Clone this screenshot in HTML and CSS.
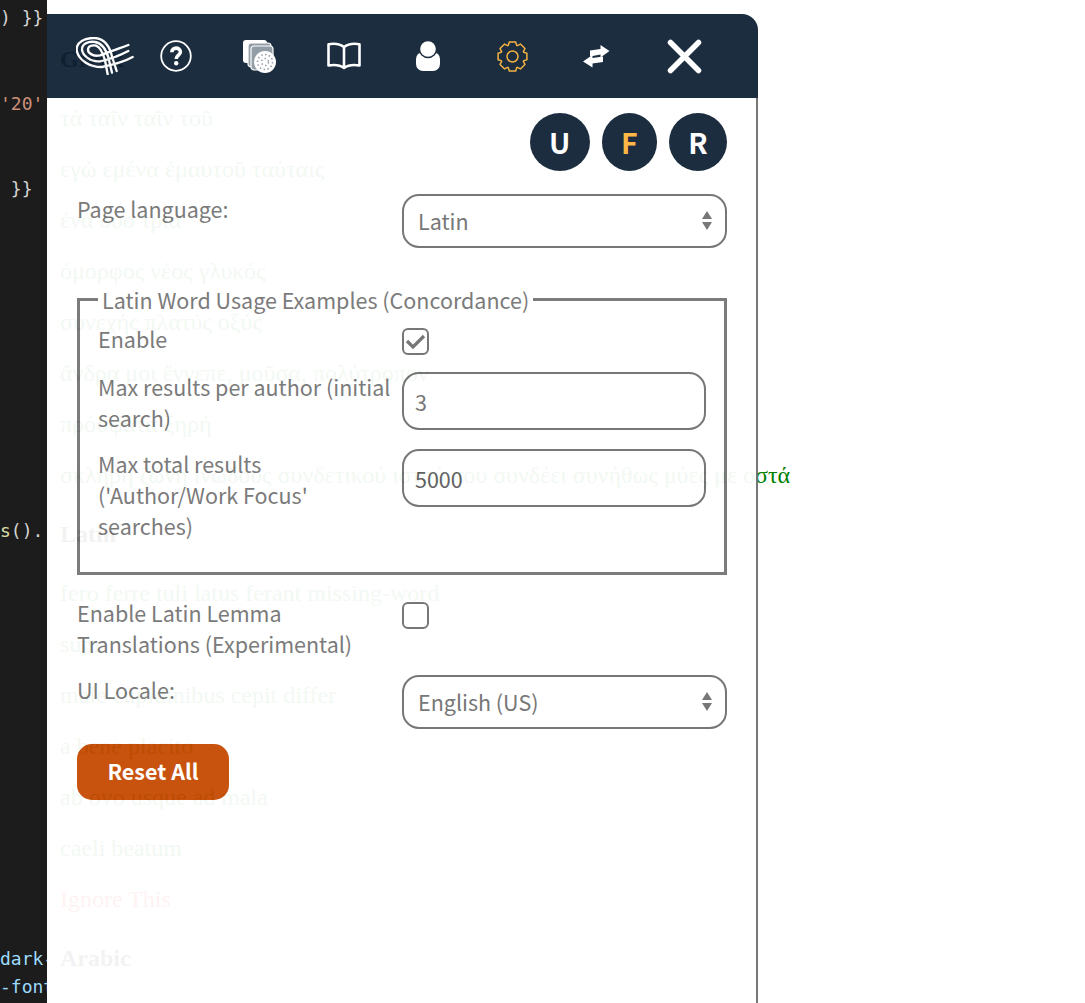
FILE: index.html
```html
<!DOCTYPE html>
<html lang="en">
<head>
<meta charset="utf-8">
<title>Settings</title>
<link rel="stylesheet" href="styles.css">
</head>
<body>
<div class="stage">
<pre class="code"><span class="c-plain">) }}</span>


<span class="c-str">'20'</span>


<span class="c-plain"> }}</span>











<span class="c-fn">s</span><span class="c-plain">().:</span>














<span class="c-var">dark-</span>
<span class="c-var">-font</span></pre>
<main class="page">
  <h3 class="heading heading-first">Greek</h3>
  <p class="line">τά ταῖν ταῖν τοῦ</p>
  <p class="line">εγώ εμένα ἐμαυτοῦ ταύταις</p>
  <p class="line">ένα δύο τρία</p>
  <p class="line">όμορφος νέος γλυκός</p>
  <p class="line">συνεχής πλατύς οξύς</p>
  <p class="line">ἄνδρα μοι ἔννεπε, μοῦσα, πολύτροπον</p>
  <p class="line">πρόσφατα ξηρή</p>
  <p class="line">σκληρή ζώνη ινώδους συνδετικού ιστού που συνδέει συνήθως μύες με οστά</p>
  <h3 class="heading">Latin</h3>
  <p class="line">fero ferre tuli latus ferant missing-word</p>
  <p class="line">sum</p>
  <p class="line">male cupidinibus cepit differ</p>
  <p class="line">a bene placito</p>
  <p class="line">ab ovo usque ad mala</p>
  <p class="line">caeli beatum</p>
  <p class="line line-ignore">Ignore This</p>
  <h3 class="heading">Arabic</h3>
</main>

<aside class="panel">
  <nav class="topbar">
    <span class="logo">
      <svg width="58" height="38" viewBox="88 110 174 114" fill="none" stroke="#fff" stroke-width="7" stroke-linecap="round">
        <path d="M258 170C235 183 205 192 165 200C130 200 95 180 90 150C88 125 115 112 145 113C175 115 190 140 197 172L210 212"/>
        <path d="M245 152C220 165 190 177 160 183C130 185 108 165 106 148C105 130 125 122 145 125C165 128 178 145 186 175L196 217"/>
        <path d="M245 134C215 145 190 155 160 165C140 170 124 158 124 148C124 138 135 133 148 136C160 140 168 155 175 180L183 222"/>
      </svg>
    </span>
    <span class="tool">
      <svg width="32" height="32" viewBox="0 0 32 32" fill="none" stroke="#fff">
        <circle cx="16" cy="16" r="14.8" stroke-width="1.8"/>
        <path d="M11.8 12.2C11.8 6.8 20.4 6.8 20.4 12C20.4 15 16.2 15.4 16.2 19" stroke-width="3.6"/>
        <circle cx="16.2" cy="23.2" r="2.2" fill="#fff" stroke="none"/>
      </svg>
    </span>
    <span class="tool">
      <svg width="34" height="33" viewBox="0 0 34 33">
        <rect x="0" y="0" width="24" height="23" rx="3" fill="#fff"/>
        <rect x="5" y="3" width="23" height="24" rx="3" fill="#8d98a2" stroke="#fff" stroke-width="1.2"/>
        <rect x="8" y="6" width="22" height="24" rx="3" fill="#8d98a2" stroke="#fff" stroke-width="1.2"/>
        <circle cx="22" cy="22" r="11" fill="#fff"/>
        <circle cx="22" cy="22" r="7.5" fill="none" stroke="#8d98a2" stroke-width="1.5" stroke-dasharray="1.5 2.4"/>
        <circle cx="22" cy="22" r="3.5" fill="none" stroke="#8d98a2" stroke-width="1.5" stroke-dasharray="1.5 2.4"/>
      </svg>
    </span>
    <span class="tool">
      <svg width="34" height="28" viewBox="0 0 34 28" fill="none" stroke="#fff" stroke-width="2.6" stroke-linejoin="round">
        <path d="M17 5C13 1.800 7 1.300 1.500 2.200V23.500C7 22.600 13 23 17 26C21 23 27 22.600 32.500 23.500V2.200C27 1.300 21 1.800 17 5Z"/>
        <path d="M17 5V26"/>
      </svg>
    </span>
    <span class="tool">
      <svg width="24" height="30" viewBox="0 0 24 30" fill="#fff">
        <rect x="0" y="11" width="24" height="19" rx="7"/>
        <circle cx="12" cy="8" r="9.2" fill="#0f2234"/>
        <circle cx="12" cy="8" r="7.8"/>
      </svg>
    </span>
    <span class="tool">
      <svg width="31" height="31" viewBox="-15.500 -15.500 31 31" fill="none" stroke="#f2ad3a" stroke-width="1.500" stroke-linejoin="round">
        <circle r="5.500"/>
        <path id="tooth" d="M-4.400-10.600L-3.200-14.400H3.200L4.400-10.600"/>
        <use href="#tooth" transform="rotate(45)"/>
        <use href="#tooth" transform="rotate(90)"/>
        <use href="#tooth" transform="rotate(135)"/>
        <use href="#tooth" transform="rotate(180)"/>
        <use href="#tooth" transform="rotate(225)"/>
        <use href="#tooth" transform="rotate(270)"/>
        <use href="#tooth" transform="rotate(315)"/>
      </svg>
    </span>
    <span class="tool">
      <svg width="27" height="23" viewBox="0 0 27 23" fill="#fff">
        <path d="M17.500 0L26.500 6L17.500 12.500V9.500L7 11.500V5.500L17.500 4Z"/>
        <path d="M9.500 10V13L20 11.500V17L9.500 18.500V22.500L0 16.500Z"/>
      </svg>
    </span>
    <span class="close">
      <svg width="35" height="35" viewBox="0 0 35 35" fill="none" stroke="#fff" stroke-width="5.500" stroke-linecap="round">
        <path d="M3.500 3.500L31.500 31.500M31.500 3.500L3.500 31.500"/>
      </svg>
    </span>
  </nav>

  <form class="settings">
    <div class="modes">
      <button type="button" class="mode">U</button>
      <button type="button" class="mode mode-active">F</button>
      <button type="button" class="mode">R</button>
    </div>

    <div class="row row-lang">
      <label class="label">Page language:</label>
      <span class="select-wrap"><select class="field field-select"><option>Latin</option></select></span>
    </div>

    <fieldset class="group">
      <legend class="legend">Latin Word Usage Examples (Concordance)</legend>
      <div class="row group-row-first">
        <label class="label">Enable</label>
        <span class="check">
          <svg width="21" height="17" viewBox="0 0 21 17" fill="none" stroke="#707070" stroke-width="3.200"><path d="M2 8L8 14L19 3"/></svg>
        </span>
      </div>
      <div class="row group-row">
        <label class="label">Max results per author (initial search)</label>
        <input class="field field-number" value="3">
      </div>
      <div class="row group-row-last">
        <label class="label">Max total results ('Author/Work Focus' searches)</label>
        <input class="field field-number field-strong" value="5000">
      </div>
    </fieldset>

    <div class="row">
      <label class="label">Enable Latin Lemma Translations (Experimental)</label>
      <span class="check"></span>
    </div>

    <div class="row">
      <label class="label">UI Locale:</label>
      <span class="select-wrap"><select class="field field-select"><option>English (US)</option></select></span>
    </div>

    <button type="button" class="reset">Reset All</button>
  </form>
</aside>
</div>
</body>
</html>
```
FILE: styles.css
```css
* { box-sizing: border-box; }

html, body { margin: 0; padding: 0; background: #fff; }

.stage {
  position: relative;
  display: flex;
  width: 1085px;
  height: 1003px;
  overflow: hidden;
}

.code {
  flex: none;
  width: 47px;
  height: 100%;
  margin: 0;
  padding-top: 4px;
  overflow: hidden;
  background: #1c1c1c;
  font: 18px/28.5px "DejaVu Sans Mono", monospace;
  white-space: pre;
}
.c-plain { color: #d4d4d4; }
.c-str { color: #ce9178; }
.c-fn { color: #dcdcaa; }
.c-var { color: #9cdcfe; }

.page {
  flex: 1;
  padding: 46px 0 0 13px;
  font: 24px/27px "Liberation Serif", "Noto Sans CJK SC", serif;
  color: #000;
}
.heading { margin: 32px 0; font-size: 24px; font-weight: 700; }
.heading-first { margin-top: 0; }
.line { margin: 24px 0; color: #008000; white-space: nowrap; }
.line-ignore { color: #f00; }

.panel {
  position: absolute;
  top: 14px;
  bottom: 0;
  left: 47px;
  display: flex;
  flex-direction: column;
  width: 711px;
  background: #fff;
  opacity: .95;
  font: 21.5px/31px "Noto Sans CJK JP", "Source Sans Pro", sans-serif;
  color: #747474;
}

.topbar {
  display: flex;
  flex: none;
  align-items: center;
  height: 84px;
  background: #0f2234;
  border-top-right-radius: 16px;
}
.logo { display: flex; margin-left: 29px; width: 58px; }
.tool { display: flex; justify-content: center; width: 84px; }
.close { display: flex; margin-left: 29px; }

.settings {
  flex: 1;
  padding: 15px 29px 0 30px;
  border-right: 2px solid #707070;
}

.modes { display: flex; justify-content: flex-end; gap: 12px; margin-bottom: 23px; }
.mode {
  height: 58px;
  padding: 0 19.3px;
  border: 0;
  border-radius: 50%;
  background: #0f2234;
  color: #fff;
  font: 700 28.5px/58px "Noto Sans CJK JP", sans-serif;
}
.mode-active { color: #ffb53c; }

.row {
  display: grid;
  grid-template-columns: 1fr 1fr;
  align-items: start;
  margin-bottom: 15px;
}
.row-lang { margin-bottom: 36px; }
.group-row-first { margin-bottom: 17px; }
.group-row { margin-bottom: 15px; }
.group-row-last { margin-bottom: 0; }

.label { display: block; margin: -1px 0 1px; padding-right: 8px; }

.field {
  display: block;
  width: 100%;
  border: 2px solid #707070;
  border-radius: 17px;
  background: transparent;
  color: #707070;
  font: 21.5px/31px "Noto Sans CJK JP", sans-serif;
  outline: 0;
}
.field-select {
  height: 54px;
  padding: 0 40px 2px 14px;
  appearance: none;
}
.field-number { height: 58px; padding: 0 11px; }
.field-strong { color: #5a5a5a; }

.select-wrap { position: relative; display: block; }
.select-wrap::before,
.select-wrap::after {
  content: "";
  position: absolute;
  right: 15px;
  width: 0;
  height: 0;
  border-left: 5px solid transparent;
  border-right: 5px solid transparent;
}
.select-wrap::before { top: 17px; border-bottom: 8px solid #707070; }
.select-wrap::after { top: 28px; border-top: 8px solid #707070; }

.group {
  margin: 0 0 23px;
  padding: 9px 18px 30px;
  border: 3px solid #747474;
  min-width: 0;
}
.legend { padding: 0 4px; }

.check {
  display: flex;
  align-items: center;
  justify-content: center;
  width: 27px;
  height: 27px;
  margin-top: 4px;
  border: 2px solid #707070;
  border-radius: 6px;
}

.reset {
  display: block;
  width: 152px;
  height: 56px;
  padding: 0 0 3px;
  border: 0;
  border-radius: 15px;
  background: #c64a02;
  color: #fff;
  font: 700 21.5px/31px "Noto Sans CJK JP", sans-serif;
}
```
